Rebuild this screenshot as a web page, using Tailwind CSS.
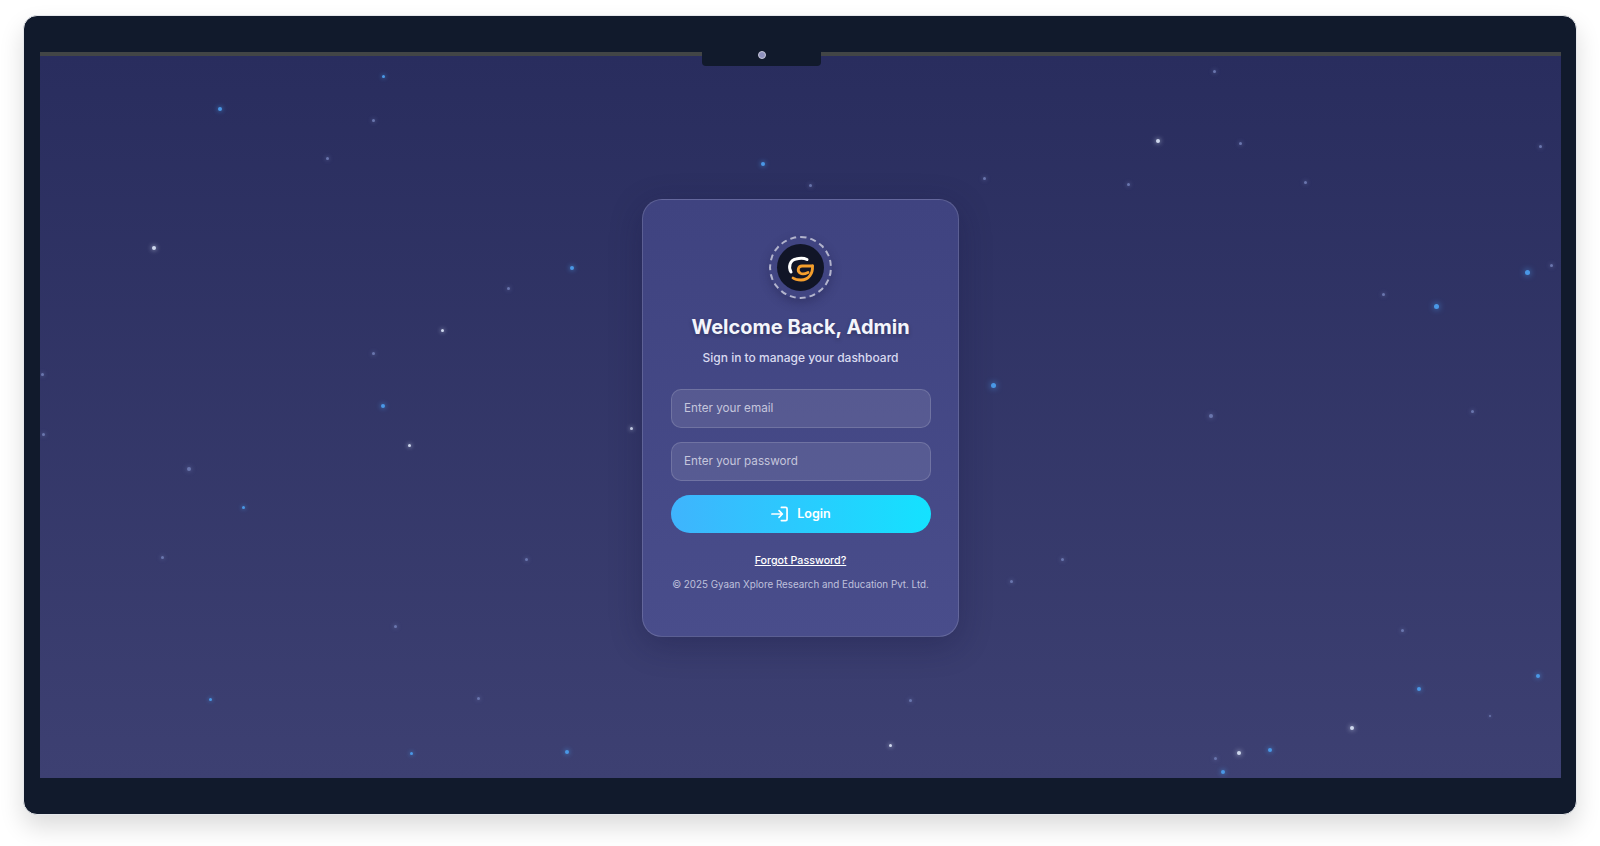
<!DOCTYPE html>
<html lang="en">
<head>
    <meta charset="UTF-8">
    <meta name="viewport" content="width=device-width, initial-scale=1.0">
    <title>Admin Login</title>
    <script src="https://cdn.jsdelivr.net/npm/@tailwindcss/browser@4"></script>
</head>
<body class="bg-white h-[846px] overflow-hidden pt-[15px] pl-[23px] font-[Inter,sans-serif]">
<!-- monitor frame -->
<div class="relative w-[1554px] h-[800px] rounded-[14px] bg-[#111a2c] border border-[#e5e7eb] shadow-[0_12px_24px_rgba(0,0,0,0.14)] pt-[36px] px-[16px]">
    <div class="absolute left-[678px] top-[36px] w-[119px] h-[14px] rounded-b-[4px] bg-[#111a2c] flex justify-center items-start z-20">
        <div class="w-2 h-2 mt-[-1px] rounded-full bg-[#8f91bd] border border-[#c4c5d6]"></div>
    </div>

    <!-- screen -->
    <div id="screen" class="relative h-[726px] w-[1521px] overflow-hidden border-t-4 border-[#424546] bg-linear-to-b/srgb from-[#292d5e] to-[#3d4072] flex justify-center pt-[143px]">
        <div id="stars" class="absolute inset-0"></div>

        <!-- login card -->
        <div class="relative w-[317px] h-[438px] rounded-[20px] border border-white/15 bg-linear-to-b/srgb from-[#3f4380] to-[#494d8b] shadow-[0_8px_32px_rgba(20,20,60,0.3)] px-7 pt-9 flex flex-col items-center text-center">
            <div class="w-[63px] h-[63px] rounded-full border-2 border-dashed border-white/60 flex items-center justify-center shadow-[0_4px_10px_rgba(30,30,70,0.35)]">
                <div class="w-[47px] h-[47px] rounded-full bg-[#111527] flex items-center justify-center">
                    <svg class="w-8 h-8" viewBox="785 251 32 32" fill="none" stroke-linecap="round">
                        <path d="M791 271C788 266 790 259 796 258C800 257 804 257 807 258.500" stroke="#fff" stroke-width="3"/>
                        <path d="M812.500 265H802C798 265 797 270 800 272C802 273.500 805 273 808 271.500" stroke="#f59e2c" stroke-width="2.800" stroke-linejoin="round"/>
                        <path d="M812.500 265C813 272 809 279 801 279C798 279 795 278.500 793 277" stroke="#f59e2c" stroke-width="2.800"/>
                    </svg>
                </div>
            </div>
            <h1 class="mt-[12px] text-[20px] leading-8 font-bold text-[#f4f5fb] [text-shadow:0_2px_4px_rgba(0,0,0,0.25)]">Welcome Back, Admin</h1>
            <p class="mt-[6px] text-[12px] leading-[18px] font-medium text-[#d9daf0]">Sign in to manage your dashboard</p>

            <form class="w-full mt-[22px] flex flex-col gap-[14px]">
                <input type="email" placeholder="Enter your email" class="w-[260px] h-[39px] rounded-[10px] border border-white/15 bg-white/10 px-3 pb-[2px] text-[11.700px] text-white placeholder:text-[#c5c6dc] outline-none">
                <input type="password" placeholder="Enter your password" class="w-[260px] h-[39px] rounded-[10px] border border-white/15 bg-white/10 px-3 pb-[2px] text-[11.700px] text-white placeholder:text-[#c5c6dc] outline-none">
                <button type="button" class="w-[260px] h-[38px] rounded-full bg-linear-to-r/srgb from-[#3fb4fd] to-[#14e2ff] flex items-center justify-center gap-[9px] text-[12.500px] font-semibold text-white">
                    <svg class="w-[17px] h-[16px]" viewBox="0 0 18 16" fill="none" stroke="#fff" stroke-width="1.800" stroke-linecap="round" stroke-linejoin="round">
                        <path d="M11 1h4.500a1.500 1.500 0 0 1 1.500 1.500v11a1.500 1.500 0 0 1-1.500 1.500H11"/>
                        <path d="M1 8h11M8.500 4.500 12 8l-3.500 3.500"/>
                    </svg>
                    Login
                </button>
            </form>

            <a href="#" class="mt-5 text-[10.700px] leading-4 font-medium text-white underline">Forgot Password?</a>
            <p class="mt-2 text-[9.800px] leading-4 text-[#bfc0dc] whitespace-nowrap">© 2025 Gyaan Xplore Research and Education Pvt. Ltd.</p>
        </div>
    </div>
</div>

<script>
    // star field: x, y in page pixels, size, colour
    const W = '#cfd8ee', B = '#4a98e6', D = '#6a76ad';
    const stars = [
        [220,109,4,B],[383,76,3,B],[373,120,3,D],[327,158,3,D],[154,248,4,W],[442,330,3,W],
        [572,268,4,B],[508,288,3,D],[373,353,3,D],[383,406,4,B],[409,445,3,W],[189,469,4,D],
        [243,507,3,B],[162,557,3,D],[210,699,3,B],[411,753,3,B],[567,752,4,B],[478,698,3,D],
        [395,626,3,D],[526,559,3,D],[631,428,3,W],[763,164,4,B],[810,185,3,D],[984,178,3,D],
        [1158,141,4,W],[1214,71,3,D],[1240,143,3,D],[1128,184,3,D],[1305,182,3,D],[1540,146,3,D],
        [1527,272,5,B],[1551,265,3,D],[1436,306,5,B],[1383,294,3,D],[993,385,5,B],[1211,416,4,D],
        [1472,411,3,D],[1062,559,3,D],[1011,581,3,D],[1402,630,3,D],[1419,689,4,B],[1538,676,4,B],
        [1352,728,4,W],[1490,716,2,D],[1239,753,4,W],[1270,750,4,B],[1223,772,4,B],[1215,758,3,D],
        [890,745,3,W],[910,700,3,D],[42,374,3,D],[43,434,3,D]
    ];
    const field = document.getElementById('stars');
    stars.forEach(([x, y, size, color]) => {
        const star = document.createElement('div');
        star.className = 'absolute rounded-full';
        star.style.left = (x - 40 - size / 2) + 'px';
        star.style.top = (y - 56 - size / 2) + 'px';
        star.style.width = size + 'px';
        star.style.height = size + 'px';
        star.style.background = color;
        star.style.boxShadow = '0 0 ' + (size + 1) + 'px ' + color;
        field.appendChild(star);
    });
</script>
</body>
</html>
